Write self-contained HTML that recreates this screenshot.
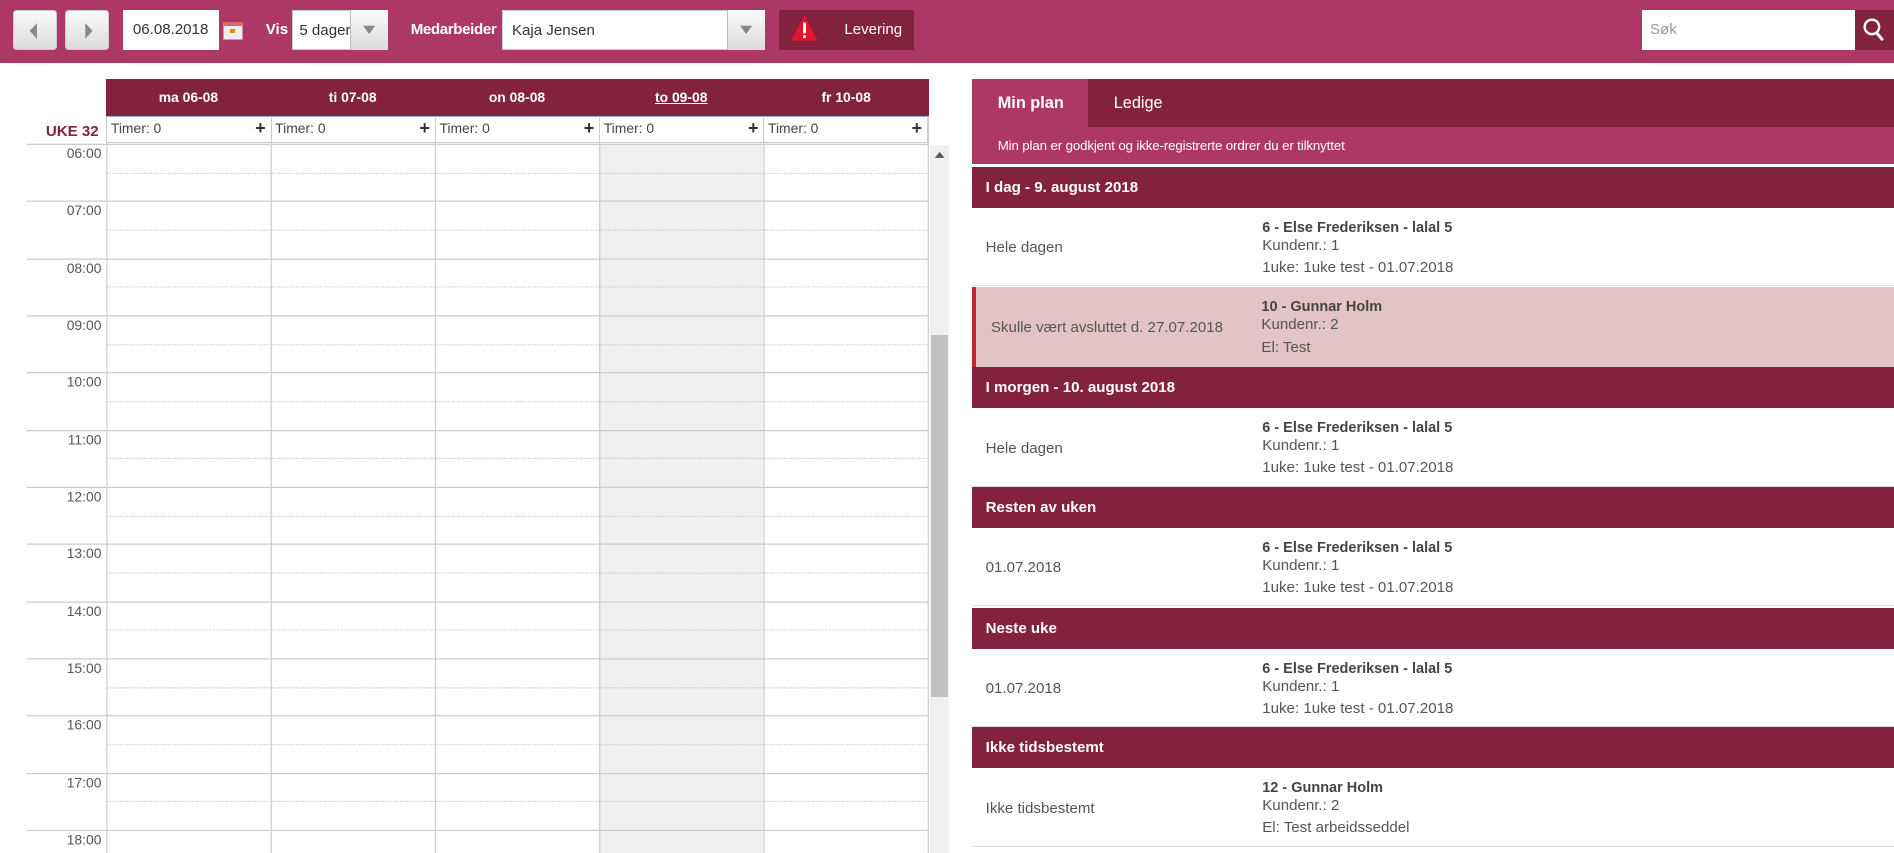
<!DOCTYPE html>
<html><head><meta charset="utf-8"><style>
*{box-sizing:border-box;margin:0;padding:0}
html,body{width:1894px;height:853px;overflow:hidden;background:#fff}
#w{zoom:1.20791;width:1568px;height:707px;position:relative;font-family:"Liberation Sans",Arial,sans-serif;font-size:12px;color:#444}
.a{position:absolute}
.top{left:0;top:0;width:1568px;height:52px;background:#ad3866}
.btn{top:8px;width:36px;height:33px;background:linear-gradient(#fafafa,#dcdcdc);border-radius:3px;border:1px solid #ccc}
.inp{background:#fff;top:8px;height:33px;font-size:12.5px;color:#333;line-height:33px}
.lbl{top:8px;line-height:33px;color:#fff;font-weight:bold;font-size:12.5px}
.arr{top:8px;height:33px;width:31px;background:linear-gradient(#fafafa,#dcdcdc);border-left:1px solid #bbb}
.dark{background:#83223f}
.hd{color:#fff;font-weight:bold;font-size:11.5px;text-align:center;line-height:31px;top:65px;height:31px}
.tm{top:96px;height:22px;border-left:1px solid #ccc;border-top:1px solid #8fb4d0;border-bottom:1px solid #ccc;font-size:11.5px;line-height:19px;padding-left:3px;color:#444}
.tm b{position:absolute;right:4px;top:0;font-size:15px;color:#333}
.sec{left:805px;width:763px;height:34px;background:#83223f;color:#fff;font-weight:bold;font-size:12.5px;line-height:34px;padding-left:11px}
.row{left:805px;width:763px;height:65px;border-bottom:1px solid #ddd;font-size:12.5px;color:#555}
.row .l{position:absolute;left:11px;top:26px}
.row .r{position:absolute;left:240px;top:9px;line-height:15px}
.row .r b{color:#444;font-size:12px}
</style></head><body><div id="w">
<div class="a top"></div>
<div class="a btn" style="left:11px"><svg width="36" height="33"><path d="M13 16.5 L19 10 L19 23Z" fill="#888"/></svg></div>
<div class="a btn" style="left:54px"><svg width="36" height="33"><path d="M22 16.5 L16 10 L16 23Z" fill="#888"/></svg></div>
<div class="a inp" style="left:102px;width:79px;padding-left:8px">06.08.2018</div>
<div class="a" style="left:185px;top:18px;width:16px;height:15px;background:#eee;border:1px solid #c99;border-top:4px solid #d66"><div style="width:4px;height:3px;background:#e80;margin:3px 0 0 5px"></div></div>
<div class="a lbl" style="left:220px">Vis</div>
<div class="a inp" style="left:242px;width:79px;padding-left:5px;border:1px solid #ccc">5 dager</div>
<div class="a arr" style="left:290px"><svg width="30" height="33"><path d="M10 13h10l-5 7z" fill="#888"/></svg></div>
<div class="a lbl" style="left:340px;letter-spacing:-0.3px">Medarbeider</div>
<div class="a inp" style="left:416px;width:217px;padding-left:7px;border:1px solid #ccc">Kaja Jensen</div>
<div class="a arr" style="left:602px"><svg width="30" height="33"><path d="M10 13h10l-5 7z" fill="#888"/></svg></div>
<div class="a dark" style="left:645px;top:8px;width:112px;height:33px;color:#fff;font-size:12.5px;line-height:33px;padding-left:54px">Levering
<svg class="a" style="left:9px;top:4px" width="24" height="24"><path d="M12 1L23 22H1Z" fill="#e3132b"/><rect x="10.8" y="7" width="2.4" height="9" fill="#fff"/><rect x="10.8" y="17.5" width="2.4" height="2.4" fill="#fff"/></svg></div>
<div class="a inp" style="left:1359px;width:177px;padding-left:7px;color:#999">Søk</div>
<div class="a dark" style="left:1536px;top:8px;width:32px;height:33px"><svg width="32" height="33"><circle cx="14" cy="14" r="6" stroke="#fff" stroke-width="2" fill="none"/><path d="M18 19l5 6" stroke="#fff" stroke-width="2.4"/></svg></div>

<div class="a dark" style="left:88px;top:65px;width:681px;height:31px"></div>
<div class="a hd" style="left:88px;width:136px">ma 06-08</div>
<div class="a hd" style="left:224px;width:136px">ti 07-08</div>
<div class="a hd" style="left:360px;width:136px">on 08-08</div>
<div class="a hd" style="left:496px;width:136px"><u>to 09-08</u></div>
<div class="a hd" style="left:632px;width:137px">fr 10-08</div>
<div class="a tm" style="left:88px;width:136px">Timer: 0<b>+</b></div>
<div class="a tm" style="left:224px;width:136px">Timer: 0<b>+</b></div>
<div class="a tm" style="left:360px;width:136px">Timer: 0<b>+</b></div>
<div class="a tm" style="left:496px;width:136px">Timer: 0<b>+</b></div>
<div class="a tm" style="left:632px;width:137px;border-right:2px solid #ccc">Timer: 0<b>+</b></div>
<div class="a" style="left:38px;top:102px;color:#83223f;font-weight:bold;font-size:12.5px">UKE 32</div>
<div class="a" style="left:496px;top:119px;width:136px;height:590px;background:#f0f0f0"></div>
<svg class="a" style="left:0;top:0" width="770" height="707">
<g stroke="#ccc" stroke-width="1">
<line x1="88.5" y1="118" x2="88.5" y2="707"/><line x1="224.5" y1="118" x2="224.5" y2="707"/><line x1="360.5" y1="118" x2="360.5" y2="707"/><line x1="496.5" y1="118" x2="496.5" y2="707"/><line x1="632.5" y1="118" x2="632.5" y2="707"/><line x1="768.5" y1="118" x2="768.5" y2="707"/>
<line x1="22" y1="119.5" x2="769" y2="119.5"/><line x1="22" y1="166.5" x2="769" y2="166.5"/><line x1="22" y1="214.5" x2="769" y2="214.5"/><line x1="22" y1="261.5" x2="769" y2="261.5"/><line x1="22" y1="308.5" x2="769" y2="308.5"/><line x1="22" y1="356.5" x2="769" y2="356.5"/><line x1="22" y1="403.5" x2="769" y2="403.5"/><line x1="22" y1="450.5" x2="769" y2="450.5"/><line x1="22" y1="498.5" x2="769" y2="498.5"/><line x1="22" y1="545.5" x2="769" y2="545.5"/><line x1="22" y1="592.5" x2="769" y2="592.5"/><line x1="22" y1="640.5" x2="769" y2="640.5"/><line x1="22" y1="687.5" x2="769" y2="687.5"/>
</g>
<g stroke="#ccc" stroke-dasharray="1 1">
<line x1="89" y1="143.5" x2="769" y2="143.5"/><line x1="89" y1="190.5" x2="769" y2="190.5"/><line x1="89" y1="237.5" x2="769" y2="237.5"/><line x1="89" y1="285.5" x2="769" y2="285.5"/><line x1="89" y1="332.5" x2="769" y2="332.5"/><line x1="89" y1="379.5" x2="769" y2="379.5"/><line x1="89" y1="427.5" x2="769" y2="427.5"/><line x1="89" y1="474.5" x2="769" y2="474.5"/><line x1="89" y1="521.5" x2="769" y2="521.5"/><line x1="89" y1="569.5" x2="769" y2="569.5"/><line x1="89" y1="616.5" x2="769" y2="616.5"/><line x1="89" y1="663.5" x2="769" y2="663.5"/>
</g>
<g font-family="Liberation Sans" font-size="11.5" fill="#555" text-anchor="end">
<text x="84" y="131">06:00</text><text x="84" y="178">07:00</text><text x="84" y="226">08:00</text><text x="84" y="273">09:00</text><text x="84" y="320">10:00</text><text x="84" y="368">11:00</text><text x="84" y="415">12:00</text><text x="84" y="462">13:00</text><text x="84" y="510">14:00</text><text x="84" y="557">15:00</text><text x="84" y="604">16:00</text><text x="84" y="652">17:00</text><text x="84" y="699">18:00</text>
</g></svg>
<div class="a" style="left:770px;top:120px;width:16px;height:590px;background:#f0f0f0"></div>
<div class="a" style="left:771px;top:277px;width:14px;height:300px;background:#c1c1c1"></div>
<svg class="a" style="left:770px;top:122px" width="16" height="12"><path d="M4 9h8l-4-5z" fill="#555"/></svg>

<div class="a dark" style="left:805px;top:65px;width:763px;height:40px"></div>
<div class="a" style="left:805px;top:65px;width:96px;height:40px;background:#ad3866;color:#fff;font-weight:bold;font-size:13.5px;line-height:40px;padding-left:21px">Min plan</div>
<div class="a" style="left:922px;top:65px;color:#fff;font-size:13.5px;line-height:40px">Ledige</div>
<div class="a" style="left:805px;top:105px;width:763px;height:31px;background:#ad3866;color:#fff;font-size:11px;line-height:31px;padding-left:21px;letter-spacing:-0.1px">Min plan er godkjent og ikke-registrerte ordrer du er tilknyttet</div>
<div class="a sec" style="top:138px">I dag - 9. august 2018</div>
<div class="a row" style="top:172px"><div class="l">Hele dagen</div><div class="r"><b>6 - Else Frederiksen - lalal 5</b><br>Kundenr.: 1<br><span style="line-height:21px">1uke: 1uke test - 01.07.2018</span></div></div>
<div class="a row" style="top:238px;height:66px;background:#e3c4c6;border-left:4px solid #c0282d;border-bottom:none"><div class="l" style="left:12px">Skulle vært avsluttet d. 27.07.2018</div><div class="r" style="left:236px"><b>10 - Gunnar Holm</b><br>Kundenr.: 2<br><span style="line-height:21px">El: Test</span></div></div>
<div class="a sec" style="top:304px">I morgen - 10. august 2018</div>
<div class="a row" style="top:338px"><div class="l">Hele dagen</div><div class="r"><b>6 - Else Frederiksen - lalal 5</b><br>Kundenr.: 1<br><span style="line-height:21px">1uke: 1uke test - 01.07.2018</span></div></div>
<div class="a sec" style="top:403px">Resten av uken</div>
<div class="a row" style="top:437px"><div class="l">01.07.2018</div><div class="r"><b>6 - Else Frederiksen - lalal 5</b><br>Kundenr.: 1<br><span style="line-height:21px">1uke: 1uke test - 01.07.2018</span></div></div>
<div class="a sec" style="top:503px">Neste uke</div>
<div class="a row" style="top:537px"><div class="l">01.07.2018</div><div class="r"><b>6 - Else Frederiksen - lalal 5</b><br>Kundenr.: 1<br><span style="line-height:21px">1uke: 1uke test - 01.07.2018</span></div></div>
<div class="a sec" style="top:602px">Ikke tidsbestemt</div>
<div class="a row" style="top:636px"><div class="l">Ikke tidsbestemt</div><div class="r"><b>12 - Gunnar Holm</b><br>Kundenr.: 2<br><span style="line-height:21px">El: Test arbeidsseddel</span></div></div>
</div></body></html>
